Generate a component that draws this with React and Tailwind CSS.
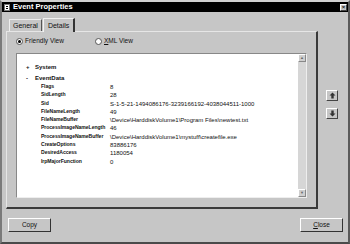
export default function App() {
  const rows = [
    ["Flags", "8"],
    ["SidLength", "28"],
    ["Sid", "S-1-5-21-1494086176-3239166192-4038044511-1000"],
    ["FileNameLength", "49"],
    ["FileNameBuffer", "\\Device\\HarddiskVolume1\\Program Files\\newtest.txt"],
    ["ProcessImageNameLength", "46"],
    ["ProcessImageNameBuffer", "\\Device\\HarddiskVolume1\\mystuff\\createfile.exe"],
    ["CreateOptions", "83886176"],
    ["DesiredAccess", "1180054"],
    ["IrpMajorFunction", "0"],
  ];
  return (
    <div className="w-[350px] h-[244px] bg-[#c6c6c6] border-2 border-t-[#d0d0d0] border-l-[#7a7a7a] border-r-[#5a5a5a] border-b-[#4a4a4a] flex flex-col font-['Liberation_Sans',Arial,sans-serif] text-[#111] overflow-hidden">
      {/* title bar */}
      <div className="h-[10px] bg-black flex items-center pl-[2px] pr-[1px]">
        <div className="w-[6px] h-[7px] bg-white border border-[#777] flex flex-col justify-center gap-[1px] px-[1px]">
          <div className="h-[1px] bg-black" />
          <div className="h-[1px] bg-black" />
        </div>
        <span className="ml-[3px] text-white font-bold text-[7.5px] leading-none">Event Properties</span>
        <div className="ml-auto w-[7px] h-[7px] bg-[#c6c6c6] border border-t-white border-l-white border-r-[#444] border-b-[#444] flex items-center justify-center text-[6px] leading-none font-bold">×</div>
      </div>
      {/* main */}
      <div className="flex flex-1">
        <div className="flex flex-col pl-[4px] w-[316px]">
          <div className="h-[19px] flex items-end pl-[3px]">
            <div className="h-[12px] px-[3px] flex items-center text-[7px] leading-none border border-b-0 border-t-[#eee] border-l-[#eee] border-r-[#555] bg-[#c6c6c6]">General</div>
            <div className="h-[14px] px-[4px] ml-[1px] -mb-[1px] flex items-center text-[7px] leading-none border border-b-0 border-t-[#f2f2f2] border-l-[#f2f2f2] border-r-2 border-r-[#333] bg-[#c6c6c6] relative z-10">
              Details
            </div>
          </div>
          <div className="h-[178px] border border-t-[#e6e6e6] border-l-[#e6e6e6] border-r-2 border-r-[#3a3a3a] border-b-2 border-b-[#3a3a3a] flex flex-col px-[9px]">
            <div className="h-[21px] flex items-center text-[6.5px] leading-none pb-[2px]">
              <div className="flex items-center w-[79px]">
                <div className="w-[7px] h-[7px] rounded-full bg-white border border-[#555] flex items-center justify-center">
                  <div className="w-[3px] h-[3px] rounded-full bg-black" />
                </div>
                <span className="ml-[2px]">Friendly View</span>
              </div>
              <div className="flex items-center">
                <div className="w-[7px] h-[7px] rounded-full bg-white border border-[#555]" />
                <span className="ml-[2px]"><span className="underline">X</span>ML View</span>
              </div>
            </div>
            <div className="h-[145px] flex border border-t-[#888] border-l-[#888] border-r-[#eee] border-b-[#eee]">
              <div className="flex-1 bg-white pt-[10px] pl-[9px] text-[6px] leading-none">
                <div className="h-[11px] flex items-start">
                  <span className="w-[9px] font-bold">+</span>
                  <span className="font-bold">System</span>
                </div>
                <div className="h-[9px] flex items-start">
                  <span className="w-[9px] font-bold">-</span>
                  <span className="font-bold">EventData</span>
                </div>
                <div className="pl-[15px]">
                  {rows.map(([k, v]) => (
                    <div key={k} className="h-[8.3px] flex items-start whitespace-nowrap">
                      <span className="w-[69px] font-bold text-[5.1px] tracking-[-0.05px]">{k}</span>
                      <span>{v}</span>
                    </div>
                  ))}
                </div>
              </div>
              <div className="w-[8px] bg-[#d6d6d6] flex flex-col justify-between">
                <div className="h-[8px] bg-[#cfcfcf] border border-t-white border-l-white border-r-[#888] border-b-[#888] flex items-center justify-center text-[4px] text-[#666] leading-none">▲</div>
                <div className="h-[8px] bg-[#cfcfcf] border border-t-white border-l-white border-r-[#888] border-b-[#888] flex items-center justify-center text-[4px] text-[#666] leading-none">▼</div>
              </div>
            </div>
          </div>
        </div>
        <div className="flex flex-col pl-[8px] pt-[78px] gap-[7px]">
          <div className="w-[12px] h-[11px] border border-t-white border-l-white border-r-[#444] border-b-[#444] flex items-center justify-center">
            <svg width="7" height="7" viewBox="0 0 7 7"><path d="M3.5 0.5 L6.5 3.5 L4.7 3.5 L4.7 6.5 L2.3 6.5 L2.3 3.5 L0.5 3.5 Z" fill="#333" /></svg>
          </div>
          <div className="w-[12px] h-[11px] border border-t-white border-l-white border-r-[#444] border-b-[#444] flex items-center justify-center">
            <svg width="7" height="7" viewBox="0 0 7 7"><path d="M3.5 6.5 L6.5 3.5 L4.7 3.5 L4.7 0.5 L2.3 0.5 L2.3 3.5 L0.5 3.5 Z" fill="#333" /></svg>
          </div>
        </div>
      </div>
      <div className="h-[33px] flex items-start pt-[9px] pl-[6px] pr-[5px] justify-between">
        <div className="w-[43px] h-[14px] border border-t-white border-l-white border-r-[#333] border-b-[#333] flex items-center justify-center text-[6.5px] leading-none">Copy</div>
        <div className="w-[43px] h-[14px] border border-t-white border-l-white border-r-[#333] border-b-[#333] flex items-center justify-center text-[6.5px] leading-none"><span><span className="underline">C</span>lose</span></div>
      </div>
    </div>
  );
}
